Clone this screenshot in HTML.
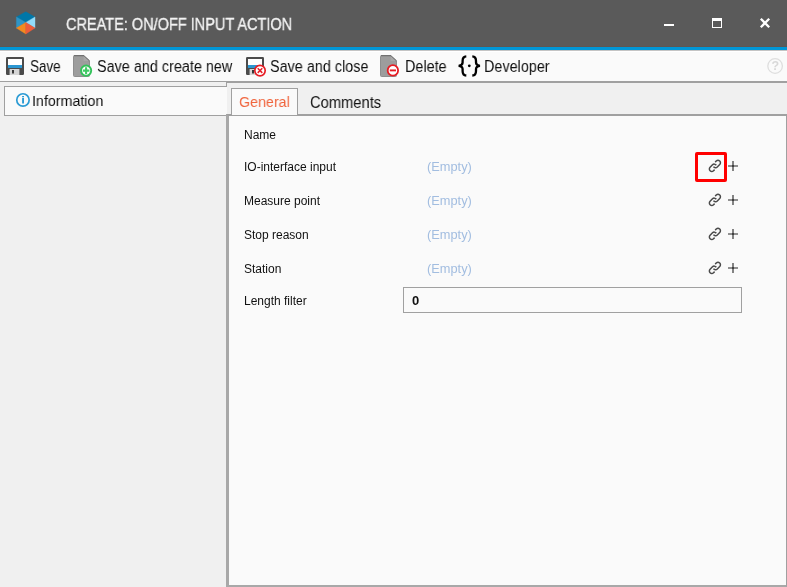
<!DOCTYPE html>
<html><head><meta charset="utf-8">
<style>
*{margin:0;padding:0;box-sizing:border-box}
html,body{width:787px;height:587px;overflow:hidden;background:#f0f0f0;font-family:"Liberation Sans",sans-serif;position:relative}
.abs{position:absolute}
#title{left:0;top:0;width:787px;height:46px;background:#5a5a5a}
#blue{left:0;top:46px;width:787px;height:5px;background:linear-gradient(#5d5653 0,#5d5653 1px,#0096d6 1px,#0096d6 4px,#c4c4c4 4px,#c4c4c4 5px)}
#tb{left:0;top:51px;width:787px;height:30px;background:#fafafa;border-top:1px solid #fff}
#tbline{left:0;top:81px;width:787px;height:1px;background:#a0a0a0}
.t{position:absolute;white-space:nowrap;color:#111;will-change:transform}
#ttext{left:66px;top:15px;font-size:16.5px;color:#f4f4f4;-webkit-text-stroke:0.35px #f4f4f4;transform-origin:0 0;transform:scaleX(0.88)}
.tbt{font-size:16px;top:58px;transform-origin:0 0;transform:scaleX(0.9)}
.sx{transform-origin:0 0;transform:scaleX(0.92)}
#leftbox{left:4px;top:86px;width:223px;height:30px;background:#fafafa;border:1px solid #a0a0a0;border-right:none}
#rp{left:226px;top:82px;width:561px;height:505px;border-top:1px solid #a0a0a0;border-left:1px solid #a0a0a0;background:#f0f0f0}
#content{left:226px;top:114px;width:561px;height:473px;background:#fafafa;border-top:2px solid #a0a0a0;border-left:3px solid #a8a8a8;border-right:1px solid #a0a0a0;border-bottom:2px solid #a8a8a8}
#tabg{left:231px;top:88px;width:67px;height:27px;background:#fafafa;border:1px solid #a0a0a0;border-bottom:none}
.lbl{font-size:12px;left:244px}
.emp{font-size:12.8px;left:427px;color:#a2bde0}
#inp{left:403px;top:287px;width:339px;height:26px;border:1px solid #a0a0a0;background:#fafafa}
#redbox{left:695px;top:152px;width:32px;height:30px;border:3px solid #ff0000;border-radius:2px}
</style></head><body>
<div id="title" class="abs"></div>
<div id="blue" class="abs"></div>
<div id="tb" class="abs"></div>
<div id="tbline" class="abs"></div>

<!-- logo -->
<svg class="abs" style="left:0;top:0" width="60" height="46" viewBox="0 0 60 46">
  <polygon points="25.8,11.8 35,17 25.8,22.4 16.4,17" fill="#0077a8" stroke="#0077a8" stroke-width="0.4" stroke-linejoin="round"/>
  <polygon points="16.4,17 25.8,22.4 16.4,28" fill="#2f95c6" stroke="#2f95c6" stroke-width="0.4" stroke-linejoin="round"/>
  <polygon points="35,17 35,28 25.8,22.4" fill="#92dbfa" stroke="#92dbfa" stroke-width="0.4" stroke-linejoin="round"/>
  <polygon points="16.4,28 25.8,22.4 25.8,33.9" fill="#f28a1f" stroke="#f28a1f" stroke-width="0.4" stroke-linejoin="round"/>
  <polygon points="25.8,22.4 35,28 25.8,33.9" fill="#ee5c3a" stroke="#ee5c3a" stroke-width="0.4" stroke-linejoin="round"/>
</svg>
<div id="ttext" class="t">CREATE: ON/OFF INPUT ACTION</div>

<!-- window buttons -->
<svg class="abs" style="left:0;top:0;z-index:5" width="787" height="587" viewBox="0 0 787 587">
  <rect x="664" y="24" width="10" height="2" fill="#fff"/>
  <rect x="712.5" y="18.5" width="9" height="9" fill="none" stroke="#fff" stroke-width="1"/>
  <rect x="712" y="18" width="10" height="3" fill="#fff"/>
  <path d="M760.8 18.8 L769.2 27.2 M769.2 18.8 L760.8 27.2" stroke="#fff" stroke-width="2.3"/>
  <!-- save floppy -->
  <g transform="translate(6,57)">
    <rect x="0" y="0" width="18" height="18" rx="1.2" fill="#4b4b4b"/>
    <rect x="2" y="2" width="14" height="6" fill="#fff"/>
    <rect x="2" y="8" width="14" height="3" fill="#2b96d1"/>
    <rect x="3.6" y="12" width="9.8" height="6" fill="#d6d6d6"/>
    <rect x="6" y="13" width="2" height="3.5" fill="#3a3a3a"/>
  </g>
  <!-- doc + green -->
  <g transform="translate(73,55)">
    <path d="M0.5 1.5 Q0.5 0.5 1.5 0.5 L10.5 0.5 L16.5 6 L16.5 20.5 Q16.5 21.5 15.5 21.5 L1.5 21.5 Q0.5 21.5 0.5 20.5 Z" fill="#9d9d9d" stroke="#8e8e8e" stroke-width="1"/><path d="M1 0.6 L10.5 0.6 L16.4 6" fill="none" stroke="#707070" stroke-width="1.1"/><path d="M10.6 1 L10.6 6 L16 6" fill="#a8a8a8"/>
  </g>
  <circle cx="86.1" cy="70.6" r="5.1" fill="#fff" stroke="#33c25a" stroke-width="1.9"/>
  <path d="M82.8 70.6 H89.4 M86.1 67.3 V73.9" stroke="#3fca64" stroke-width="2.1"/>
  <!-- save and close -->
  <g transform="translate(246,57)">
    <rect x="0" y="0" width="18" height="18" rx="1.2" fill="#4b4b4b"/>
    <rect x="2" y="2" width="14" height="6" fill="#fff"/>
    <rect x="2" y="8" width="14" height="3" fill="#2b96d1"/>
    <rect x="3.6" y="12" width="9.8" height="6" fill="#d6d6d6"/>
    <rect x="6" y="13" width="2" height="3.5" fill="#3a3a3a"/>
  </g>
  <circle cx="260" cy="70.6" r="5.2" fill="#fff" stroke="#e61c24" stroke-width="1.7"/>
  <path d="M257.7 68.3 L262.3 72.9 M262.3 68.3 L257.7 72.9" stroke="#e61c24" stroke-width="1.5"/>
  <!-- delete -->
  <g transform="translate(380,55)">
    <path d="M0.5 1.5 Q0.5 0.5 1.5 0.5 L10.5 0.5 L16.5 6 L16.5 20.5 Q16.5 21.5 15.5 21.5 L1.5 21.5 Q0.5 21.5 0.5 20.5 Z" fill="#9d9d9d" stroke="#8e8e8e" stroke-width="1"/><path d="M1 0.6 L10.5 0.6 L16.4 6" fill="none" stroke="#707070" stroke-width="1.1"/><path d="M10.6 1 L10.6 6 L16 6" fill="#a8a8a8"/>
  </g>
  <circle cx="392.9" cy="70.4" r="5.2" fill="#fff" stroke="#e61c24" stroke-width="1.8"/>
  <path d="M389.8 70.4 H396" stroke="#e61c24" stroke-width="1.9"/>
  <!-- developer braces -->
  <path d="M466.3 56.4 C463.3 56.6 462.6 58.5 462.6 61 L462.6 62.6 C462.6 64.6 461.2 65.6 458.6 65.8 C461.2 66 462.6 67.1 462.6 69.1 L462.6 70.9 C462.6 73.4 463.3 75.3 466.3 75.5" fill="none" stroke="#000" stroke-width="2.3"/>
  <path d="M472.3 56.4 C475.3 56.6 476 58.5 476 61 L476 62.6 C476 64.6 477.4 65.6 480 65.8 C477.4 66 476 67.1 476 69.1 L476 70.9 C476 73.4 475.3 75.3 472.3 75.5" fill="none" stroke="#000" stroke-width="2.3"/>
  <circle cx="469.3" cy="65.8" r="1.4" fill="#000"/>
  <!-- help -->
  <circle cx="775.1" cy="66" r="7.3" fill="none" stroke="#dedede" stroke-width="1.3"/>
  <text x="775.3" y="70.4" font-family="Liberation Sans" font-size="12.5" font-weight="bold" fill="#d8d8d8" text-anchor="middle">?</text>
  <!-- info -->
  <circle cx="22.95" cy="99.95" r="6.2" fill="none" stroke="#2b9bd4" stroke-width="1.7"/>
  <rect x="22.1" y="96" width="1.9" height="1.3" fill="#2b9bd4"/>
  <rect x="22.1" y="98" width="1.9" height="5.5" fill="#2b9bd4"/>
  <g transform="translate(714.9,165.9) rotate(-45)" fill="none" stroke="#4a4a4a" stroke-width="1.5">
    <path d="M2.86 -2.45 L4.35 -2.45 A2.45 2.45 0 0 1 4.35 2.45 L0.94 2.45 A2.45 2.45 0 0 1 -1.45 -0.53"/>
    <path d="M-2.86 2.45 L-4.35 2.45 A2.45 2.45 0 0 1 -4.35 -2.45 L-0.94 -2.45 A2.45 2.45 0 0 1 1.45 0.53"/>
  </g>
  <path d="M728 166 H738 M733 161 V171" stroke="#6e6e6e" stroke-width="1.7"/><rect x="732" y="165" width="2" height="2" fill="#404040"/>
  <g transform="translate(714.9,199.9) rotate(-45)" fill="none" stroke="#4a4a4a" stroke-width="1.5">
    <path d="M2.86 -2.45 L4.35 -2.45 A2.45 2.45 0 0 1 4.35 2.45 L0.94 2.45 A2.45 2.45 0 0 1 -1.45 -0.53"/>
    <path d="M-2.86 2.45 L-4.35 2.45 A2.45 2.45 0 0 1 -4.35 -2.45 L-0.94 -2.45 A2.45 2.45 0 0 1 1.45 0.53"/>
  </g>
  <path d="M728 200 H738 M733 195 V205" stroke="#6e6e6e" stroke-width="1.7"/><rect x="732" y="199" width="2" height="2" fill="#404040"/>
  <g transform="translate(714.9,233.9) rotate(-45)" fill="none" stroke="#4a4a4a" stroke-width="1.5">
    <path d="M2.86 -2.45 L4.35 -2.45 A2.45 2.45 0 0 1 4.35 2.45 L0.94 2.45 A2.45 2.45 0 0 1 -1.45 -0.53"/>
    <path d="M-2.86 2.45 L-4.35 2.45 A2.45 2.45 0 0 1 -4.35 -2.45 L-0.94 -2.45 A2.45 2.45 0 0 1 1.45 0.53"/>
  </g>
  <path d="M728 234 H738 M733 229 V239" stroke="#6e6e6e" stroke-width="1.7"/><rect x="732" y="233" width="2" height="2" fill="#404040"/>
  <g transform="translate(714.9,267.9) rotate(-45)" fill="none" stroke="#4a4a4a" stroke-width="1.5">
    <path d="M2.86 -2.45 L4.35 -2.45 A2.45 2.45 0 0 1 4.35 2.45 L0.94 2.45 A2.45 2.45 0 0 1 -1.45 -0.53"/>
    <path d="M-2.86 2.45 L-4.35 2.45 A2.45 2.45 0 0 1 -4.35 -2.45 L-0.94 -2.45 A2.45 2.45 0 0 1 1.45 0.53"/>
  </g>
  <path d="M728 268 H738 M733 263 V273" stroke="#6e6e6e" stroke-width="1.7"/><rect x="732" y="267" width="2" height="2" fill="#404040"/>
</svg>
<!-- toolbar icons -->
<div class="t tbt" style="left:30px;transform:scaleX(0.84)">Save</div>
<div class="t tbt" style="left:97px">Save and create new</div>
<div class="t tbt" style="left:270px">Save and close</div>
<div class="t tbt" style="left:405px">Delete</div>
<div class="t tbt" style="left:484px">Developer</div>

<div id="rp" class="abs"></div>
<div id="leftbox" class="abs"></div>
<div id="content" class="abs"></div>
<div id="tabg" class="abs"></div>
<div class="t sx" style="left:32px;top:92px;font-size:15.5px">Information</div>
<div class="t sx" style="left:239px;top:93px;font-size:15.5px;color:#f0643c">General</div>
<div class="t sx" style="left:310px;top:93.5px;font-size:16px">Comments</div>

<div class="t lbl" style="top:128px">Name</div>
<div class="t lbl" style="top:160px">IO-interface input</div>
<div class="t lbl" style="top:194px">Measure point</div>
<div class="t lbl" style="top:228px">Stop reason</div>
<div class="t lbl" style="top:262px">Station</div>
<div class="t lbl" style="top:294px">Length filter</div>
<div class="t emp" style="top:158.8px">(Empty)</div>
<div class="t emp" style="top:192.8px">(Empty)</div>
<div class="t emp" style="top:226.8px">(Empty)</div>
<div class="t emp" style="top:260.8px">(Empty)</div>
<div id="inp" class="abs"></div>
<div class="t" style="left:412px;top:293px;font-size:13px;font-weight:bold">0</div>

<div id="redbox" class="abs" style="z-index:6"></div>
</body></html>
